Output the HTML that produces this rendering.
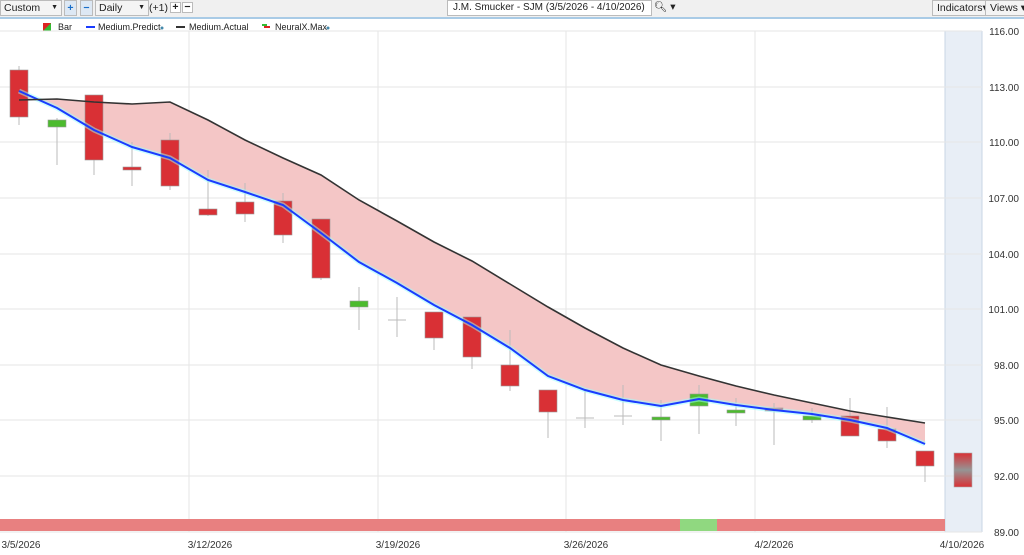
<!DOCTYPE html>
<html><head><meta charset="utf-8"><style>
body{margin:0;width:1024px;height:555px;overflow:hidden;background:#fff;font-family:"Liberation Sans",sans-serif;}
.tb{position:absolute;left:0;top:0;width:1024px;height:17px;background:#f0f0f0;border-bottom:2px solid #a9cbe6;font-size:10.5px;color:#222;white-space:nowrap}
.bx{position:absolute;top:0;height:14px;border:1px solid #bbb;background:#f4f4f4;line-height:14px;padding-left:3px;box-sizing:content-box;white-space:nowrap;overflow:hidden}
</style></head><body>
<div class="tb">
<div class="bx" style="left:0;width:57px">Custom<span style="position:absolute;right:3px;font-size:7px">▼</span></div>
<div class="bx" style="left:64px;width:11px;padding:0;background:#dde8f4;color:#1a6fc9;text-align:center;font-weight:bold">+</div>
<div class="bx" style="left:80px;width:11px;padding:0;background:#dde8f4;color:#1a6fc9;text-align:center;font-weight:bold">−</div>
<div class="bx" style="left:95px;width:49px">Daily<span style="position:absolute;right:3px;font-size:7px">▼</span></div>
<div style="position:absolute;left:149px;top:1px;line-height:14px">(+1)</div>
<div class="bx" style="left:170px;width:9px;height:9px;top:2px;padding:0;line-height:9px;text-align:center;font-weight:bold;background:#fff">+</div>
<div class="bx" style="left:182px;width:9px;height:9px;top:2px;padding:0;line-height:9px;text-align:center;font-weight:bold;background:#fff">−</div>
<div class="bx" style="left:447px;width:198px;background:#fff;padding-left:5px;font-size:10px">J.M. Smucker - SJM (3/5/2026 - 4/10/2026)</div>
<div style="position:absolute;left:654px;top:0;line-height:14px">🔍︎ ▾</div>
<div class="bx" style="left:932px;width:48px;padding-left:4px">Indicators▾</div>
<div class="bx" style="left:985px;width:35px;padding-left:4px">Views ▾</div>
</div>
<svg width="1024" height="555" style="position:absolute;left:0;top:0" font-family="Liberation Sans, sans-serif">
<g font-size="9" fill="#222">
<rect x="43" y="23" width="8" height="8" fill="#d22"/><path d="M43 31 L51 23 L51 31Z" fill="#3b3"/>
<text x="58" y="30">Bar</text>
<rect x="86" y="26" width="9" height="2" fill="#1a3cff"/><text x="98" y="30">Medium.Predict</text><circle cx="162" cy="28" r="1.5" fill="#48a"/>
<rect x="176" y="26" width="9" height="2" fill="#333"/><text x="189" y="30">Medium.Actual</text>
<rect x="262" y="24" width="5" height="2" fill="#3b3"/><rect x="264" y="26" width="6" height="2" fill="#d22"/><text x="275" y="30">NeuralX.Max</text><circle cx="328" cy="28" r="1.5" fill="#48a"/>
</g>
<rect x="945" y="31" width="37" height="501" fill="#e8eef6"/>
<line x1="945" y1="31" x2="945" y2="532" stroke="#c9d5e4"/><line x1="982" y1="31" x2="982" y2="532" stroke="#c9d5e4"/>
<g stroke="#e6e6e6">
<line x1="0" y1="31" x2="982" y2="31"/><line x1="0" y1="87" x2="982" y2="87"/><line x1="0" y1="142" x2="982" y2="142"/><line x1="0" y1="198" x2="982" y2="198"/><line x1="0" y1="254" x2="982" y2="254"/><line x1="0" y1="309" x2="982" y2="309"/><line x1="0" y1="365" x2="982" y2="365"/><line x1="0" y1="420" x2="982" y2="420"/><line x1="0" y1="476" x2="982" y2="476"/><line x1="0" y1="532" x2="982" y2="532"/>
<line x1="189" y1="31" x2="189" y2="532"/><line x1="378" y1="31" x2="378" y2="532"/><line x1="566" y1="31" x2="566" y2="532"/><line x1="755" y1="31" x2="755" y2="532"/>
</g>
<g font-size="10" fill="#333" text-anchor="end">
<text x="1019" y="35">116.00</text><text x="1019" y="91">113.00</text><text x="1019" y="146">110.00</text><text x="1019" y="202">107.00</text><text x="1019" y="258">104.00</text><text x="1019" y="313">101.00</text><text x="1019" y="369">98.00</text><text x="1019" y="424">95.00</text><text x="1019" y="480">92.00</text><text x="1019" y="536">89.00</text>
</g>
<polygon fill="#f4c6c6" points="19,100 57,99 94,102 132,104 170,102 208,120 245,140 283,158 321,175 359,200 397,221 434,242 472,261 510,284 548,307 585,328 623,348 661,365 699,376 736,386 774,395 812,403 850,411 887,417 925,423 925,444 887,428 850,420 812,414 774,410 736,405 699,399 661,406 623,400 585,390 548,376 510,348 472,325 434,305 397,283 359,262 321,233 283,205 245,192 208,180 170,158 132,147 94,130 57,108 19,91"/>
<g stroke="#bbb" stroke-width="1">
<line x1="19" y1="66" x2="19" y2="125"/><line x1="57" y1="118" x2="57" y2="165"/><line x1="94" y1="95" x2="94" y2="175"/><line x1="132" y1="142" x2="132" y2="186"/><line x1="170" y1="133" x2="170" y2="190"/><line x1="208" y1="170" x2="208" y2="216"/><line x1="245" y1="183" x2="245" y2="222"/><line x1="283" y1="193" x2="283" y2="243"/><line x1="321" y1="219" x2="321" y2="280"/><line x1="359" y1="287" x2="359" y2="330"/><line x1="397" y1="297" x2="397" y2="337"/><line x1="434" y1="312" x2="434" y2="350"/><line x1="472" y1="317" x2="472" y2="369"/><line x1="510" y1="330" x2="510" y2="391"/><line x1="548" y1="390" x2="548" y2="438"/><line x1="585" y1="390" x2="585" y2="428"/><line x1="623" y1="385" x2="623" y2="425"/><line x1="661" y1="400" x2="661" y2="441"/><line x1="699" y1="385" x2="699" y2="434"/><line x1="736" y1="398" x2="736" y2="426"/><line x1="774" y1="403" x2="774" y2="445"/><line x1="812" y1="408" x2="812" y2="423"/><line x1="850" y1="398" x2="850" y2="436"/><line x1="887" y1="407" x2="887" y2="448"/><line x1="925" y1="451" x2="925" y2="482"/>
<line x1="576" y1="418" x2="594" y2="418"/><line x1="388" y1="320" x2="406" y2="320"/><line x1="614" y1="416" x2="632" y2="416"/>
</g>
<g stroke="#999" stroke-width="0.6">
<rect x="10" y="70" width="18" height="47" fill="#d93035"/>
<rect x="48" y="120" width="18" height="7" fill="#4cbb2e"/>
<rect x="85" y="95" width="18" height="65" fill="#d93035"/>
<rect x="123" y="167" width="18" height="3" fill="#d93035"/>
<rect x="161" y="140" width="18" height="46" fill="#d93035"/>
<rect x="199" y="209" width="18" height="6" fill="#d93035"/>
<rect x="236" y="202" width="18" height="12" fill="#d93035"/>
<rect x="274" y="201" width="18" height="34" fill="#d93035"/>
<rect x="312" y="219" width="18" height="59" fill="#d93035"/>
<rect x="350" y="301" width="18" height="6" fill="#4cbb2e"/>
<rect x="425" y="312" width="18" height="26" fill="#d93035"/>
<rect x="463" y="317" width="18" height="40" fill="#d93035"/>
<rect x="501" y="365" width="18" height="21" fill="#d93035"/>
<rect x="539" y="390" width="18" height="22" fill="#d93035"/>
<rect x="652" y="417" width="18" height="3" fill="#4cbb2e"/>
<rect x="690" y="394" width="18" height="12" fill="#4cbb2e"/>
<rect x="727" y="410" width="18" height="3" fill="#4cbb2e"/>
<rect x="765" y="408" width="18" height="3" fill="#d93035"/>
<rect x="803" y="416" width="18" height="4" fill="#4cbb2e"/>
<rect x="841" y="416" width="18" height="20" fill="#d93035"/>
<rect x="878" y="429" width="18" height="12" fill="#d93035"/>
<rect x="916" y="451" width="18" height="15" fill="#d93035"/>
</g>
<defs><linearGradient id="g" x1="0" y1="0" x2="0" y2="1"><stop offset="0" stop-color="#d93035"/><stop offset="0.5" stop-color="#959595"/><stop offset="1" stop-color="#d93035"/></linearGradient></defs>
<rect x="954" y="453" width="18" height="34" fill="url(#g)" stroke="#aaa" stroke-width="0.6"/>
<polyline fill="none" stroke="#9ff" stroke-width="5" stroke-opacity="0.5" points="19,91 57,108 94,130 132,147 170,158 208,180 245,192 283,205 321,233 359,262 397,283 434,305 472,325 510,348 548,376 585,390 623,400 661,406 699,399 736,405 774,410 812,414 850,420 887,428 925,444"/>
<polyline fill="none" stroke="#1a3cff" stroke-width="2" points="19,91 57,108 94,130 132,147 170,158 208,180 245,192 283,205 321,233 359,262 397,283 434,305 472,325 510,348 548,376 585,390 623,400 661,406 699,399 736,405 774,410 812,414 850,420 887,428 925,444"/>
<polyline fill="none" stroke="#333" stroke-width="1.6" points="19,100 57,99 94,102 132,104 170,102 208,120 245,140 283,158 321,175 359,200 397,221 434,242 472,261 510,284 548,307 585,328 623,348 661,365 699,376 736,386 774,395 812,403 850,411 887,417 925,423"/>
<rect x="0" y="519" width="945" height="12" fill="#e88080"/>
<rect x="680" y="519" width="37" height="12" fill="#90d880"/>
<g font-size="10" fill="#333" text-anchor="middle">
<text x="21" y="548">3/5/2026</text><text x="210" y="548">3/12/2026</text><text x="398" y="548">3/19/2026</text><text x="586" y="548">3/26/2026</text><text x="774" y="548">4/2/2026</text><text x="962" y="548">4/10/2026</text>
</g>
</svg>
</body></html>
